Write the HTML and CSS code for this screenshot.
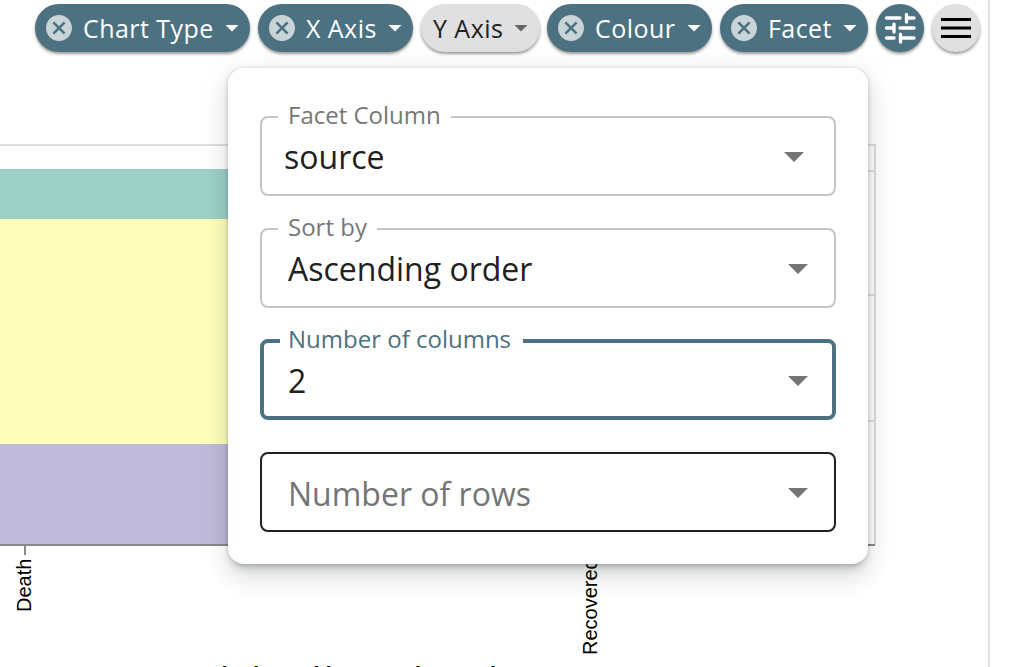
FILE: index.html
```html
<!DOCTYPE html>
<html lang="en">
<head>
<meta charset="utf-8">
<title>Chart settings</title>
<link rel="stylesheet" href="styles.css">
</head>
<body>
<svg class="chart" width="1017" height="667" viewBox="0 0 1017 667">
  <g class="grid">
    <path d="M0 145H875V545M860 171H875M860 295H875M860 421H875"/>
  </g>
  <rect x="0" y="169" width="500" height="50" fill="#9dd1c7"/>
  <rect x="0" y="219" width="500" height="225" fill="#feffbb"/>
  <rect x="0" y="444" width="500" height="101" fill="#bfbad9"/>
  <path class="axis" d="M0 545H875M25 545V555"/>
  <text class="tick" transform="translate(31 612) rotate(-90)">Death</text>
  <text class="tick" transform="translate(597 655) rotate(-90)">Recovered</text>
  <text class="axis-title" y="682.4"><tspan x="221.5">in </tspan><tspan x="253">hour </tspan><tspan x="313.5">i</tspan><tspan x="325.5">because</tspan><tspan x="415">hence</tspan><tspan x="490">i</tspan></text>
  <path class="edge" d="M989 0V667"/>
</svg>
<svg width="0" height="0" class="defs">
  <symbol id="cancel" viewBox="2 2 20 20"><path d="M12 2C6.47 2 2 6.47 2 12s4.47 10 10 10 10-4.47 10-10S17.53 2 12 2zm5 13.59L15.59 17 12 13.41 8.41 17 7 15.59 10.59 12 7 8.41 8.41 7 12 10.59 15.59 7 17 8.41 13.41 12 17 15.59z"/></symbol>
</svg>
<nav class="toolbar">
  <button class="chip chip-type"><svg class="cancel"><use href="#cancel"/></svg><span>Chart Type</span><i class="caret"></i></button>
  <button class="chip chip-x"><svg class="cancel"><use href="#cancel"/></svg><span>X Axis</span><i class="caret"></i></button>
  <button class="chip chip-y"><span>Y Axis</span><i class="caret"></i></button>
  <button class="chip chip-colour"><svg class="cancel"><use href="#cancel"/></svg><span>Colour</span><i class="caret"></i></button>
  <button class="chip chip-facet"><svg class="cancel"><use href="#cancel"/></svg><span>Facet</span><i class="caret"></i></button>
  <button class="round" aria-label="Options"><svg width="32" height="32" viewBox="0 0 32 32" fill="none" stroke="#fff" stroke-width="3.4" stroke-linecap="round"><path d="M2.5 6H16M22.5 6H30M22.5 2.5V10M2.5 16H10M10 12.3V20M16 16H30M2.5 26H10M16.5 22.3V30M16.5 26H30"/></svg></button>
  <button class="round round-menu" aria-label="Menu"><svg width="30" height="20" viewBox="0 0 30 20"><path d="M0 0H30V3H0zM0 8.5H30V11.5H0zM0 17H30V20H0z"/></svg></button>
</nav>
<section class="panel">
  <fieldset class="field field-facet"><legend>Facet Column</legend><div class="row"><span>source</span><i class="arrow"></i></div></fieldset>
  <fieldset class="field"><legend>Sort by</legend><div class="row"><span>Ascending order</span><i class="arrow"></i></div></fieldset>
  <fieldset class="field field-focus"><legend>Number of columns</legend><div class="row"><span>2</span><i class="arrow"></i></div></fieldset>
  <div class="field field-empty"><div class="row"><span>Number of rows</span><i class="arrow"></i></div></div>
</section>
</body>
</html>
```
FILE: styles.css
```css
* { box-sizing: border-box; }
body { margin: 0; width: 1017px; height: 667px; overflow: hidden; position: relative; background: #fff; font-family: "Open Sans", "Noto Sans", sans-serif; }
.chart { position: absolute; left: 0; top: 0; }
.defs { position: absolute; }
.grid { fill: none; stroke: #ddd; stroke-width: 2; }
.axis { fill: none; stroke: #888; stroke-width: 2; }
.edge { stroke: #e0e0e0; stroke-width: 2; }
.tick { font: 20px "Liberation Sans", sans-serif; }
.axis-title { font: bold 22px "Liberation Sans", sans-serif; }
.toolbar { position: relative; display: flex; gap: 8px; padding: 4px 0 0 35px; }
.chip, .round { height: 48px; border: 0; border-radius: 24px; background: #4c7180; color: #fff; box-shadow: 0 2px 3px rgba(0,0,0,.4); flex: none; }
.chip { display: flex; align-items: center; padding: 0 11px; font: 25px "Open Sans", sans-serif; letter-spacing: .45px; white-space: nowrap; }
.chip span { line-height: 48px; margin-bottom: 1px; }
.chip-type { width: 215px; }
.chip-x { width: 155px; }
.chip-y { width: 119px; padding-left: 12px; padding-right: 12px; background: #e0e0e0; color: #212121; margin-right: -1px; }
.chip-colour { width: 165px; }
.chip-facet { width: 148px; }
.cancel { width: 26px; height: 26px; margin-right: 11px; fill: #c9d4d9; flex: none; }
.caret { width: 14px; height: 7px; margin-left: auto; background: currentColor; clip-path: polygon(0 0, 100% 0, 50% 100%); flex: none; }
.chip-y .caret { background: #666; }
.round { width: 48px; padding: 0; display: flex; align-items: center; justify-content: center; }
.round-menu { background: #e0e0e0; }
.panel { position: absolute; left: 228px; top: 68px; width: 640px; height: 496px; padding: 48px 32px 32px; display: grid; grid-template-rows: repeat(4, 80px); row-gap: 32px; background: #fff; border-radius: 16px; box-shadow: 0 10px 10px -6px rgba(40,60,55,.2), 0 16px 20px 2px rgba(40,60,55,.07), 0 6px 28px 4px rgba(0,0,0,.08), 0 1px 5px rgba(0,0,0,.2); }
.field { min-width: 0; margin: -1px 0 0; padding: 0; border: 2px solid #c4c4c4; border-radius: 8px; height: 81px; color: #212121; font: 32px "Open Sans", sans-serif; }
.field legend { margin-left: 16px; padding: 0 10px; height: 4px; line-height: 0; font-size: 24px; color: #777; white-space: nowrap; }
.row { display: flex; align-items: center; justify-content: space-between; height: 75px; padding: 1px 26px 0; }
.row span { margin-bottom: 2px; }
.arrow { width: 20px; height: 10px; background: #757575; clip-path: polygon(0 0, 100% 0, 50% 100%); }
.field-facet .row { padding-left: 22px; padding-right: 30px; }
.field-focus { border: 4px solid #4c7180; }
.field-focus legend { color: #4c7180; padding: 0 12px 0 8px; }
.field-focus .row { height: 73px; padding: 3px 24px 0; }
.field-empty { height: 80px; margin-top: 0; border-color: #212121; }
.field-empty .row { height: 76px; padding-top: 2px; color: #757575; }
.field-empty .row span { margin-bottom: 0; }
```
